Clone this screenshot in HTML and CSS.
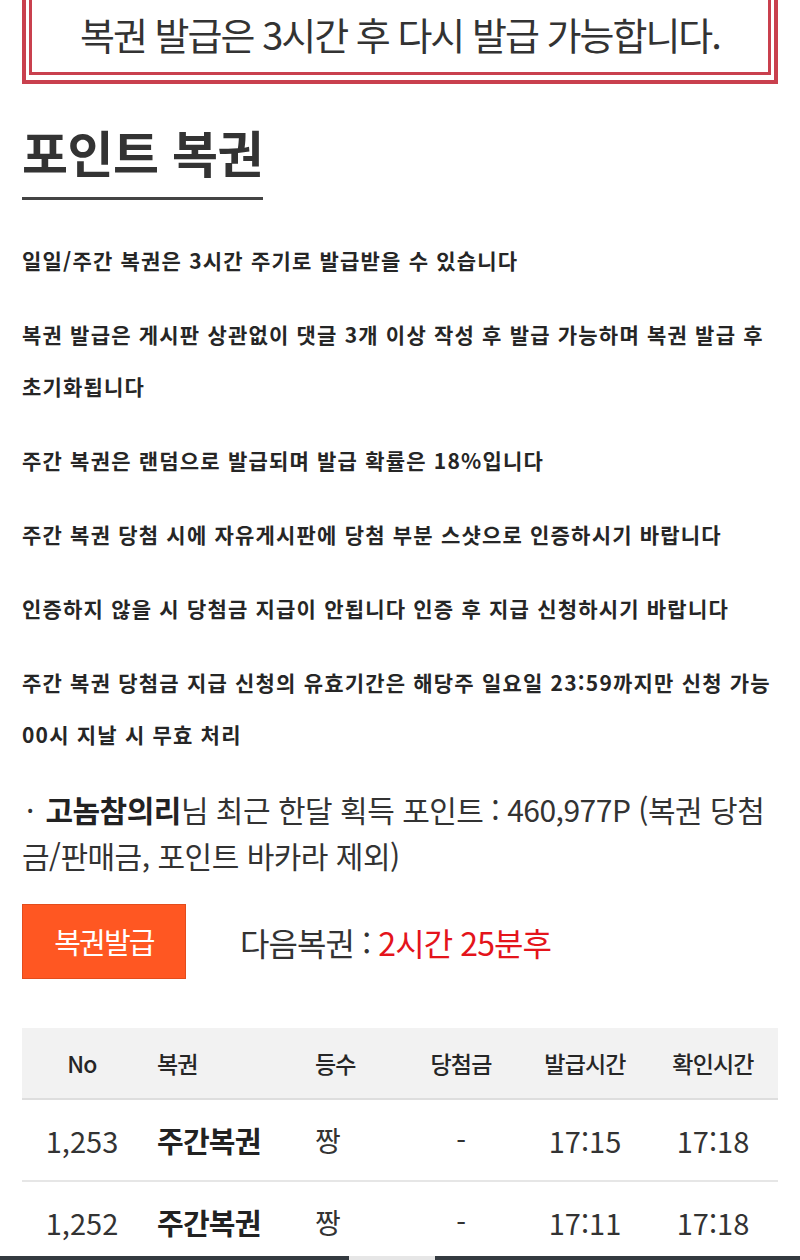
FILE: index.html
```html
<!DOCTYPE html>
<html lang="ko">
<head>
<meta charset="utf-8">
<title>포인트 복권</title>
<link rel="stylesheet" href="styles.css">
</head>
<body>
<div class="page">
  <div class="notice">
    <div class="notice-inner">복권 발급은 3시간 후 다시 발급 가능합니다.</div>
  </div>

  <h1 class="title">포인트 복권</h1>

  <div class="rules">
    <p>일일/주간 복권은 3시간 주기로 발급받을 수 있습니다</p>
    <p>복권 발급은 게시판 상관없이 댓글 3개 이상 작성 후 발급 가능하며 복권 발급 후 초기화됩니다</p>
    <p>주간 복권은 랜덤으로 발급되며 발급 확률은 18%입니다</p>
    <p>주간 복권 당첨 시에 자유게시판에 당첨 부분 스샷으로 인증하시기 바랍니다</p>
    <p>인증하지 않을 시 당첨금 지급이 안됩니다 인증 후 지급 신청하시기 바랍니다</p>
    <p>주간 복권 당첨금 지급 신청의 유효기간은 해당주 일요일 23:59까지만 신청 가능 00시 지날 시 무효 처리</p>
  </div>

  <p class="points"><span class="bullet">·</span><b>고놈참의리</b>님 최근 한달 획득 포인트 : 460,977P (복권 당첨금/판매금, 포인트 바카라 제외)</p>

  <div class="issue">
    <button class="issue-btn" type="button">복권발급</button>
    <span class="next">다음복권 : <em>2시간 25분후</em></span>
  </div>

  <table class="list">
    <colgroup>
      <col class="c1"><col class="c2"><col class="c3"><col class="c4"><col class="c5"><col class="c6">
    </colgroup>
    <thead>
      <tr>
        <th>No</th><th class="left">복권</th><th class="left">등수</th><th>당첨금</th><th>발급시간</th><th>확인시간</th>
      </tr>
    </thead>
    <tbody>
      <tr>
        <td class="num">1,253</td><td class="left strong">주간복권</td><td class="left">짱</td><td>-</td><td class="num">17:15</td><td class="num">17:18</td>
      </tr>
      <tr>
        <td class="num">1,252</td><td class="left strong">주간복권</td><td class="left">짱</td><td>-</td><td class="num">17:11</td><td class="num">17:18</td>
      </tr>
    </tbody>
  </table>
</div>
<div class="footbar"><span class="footbar-seg"></span></div>
</body>
</html>
```

FILE: styles.css
```css
* { box-sizing: border-box; }
html, body { margin: 0; padding: 0; background: #fff; }
body {
  font-family: "Noto Sans CJK KR", "Noto Sans", sans-serif;
  color: #333;
}
.page { padding: 0 22px 40px; }

.notice {
  border: 4px solid #c9404e;
  border-top: 0;
  padding: 0 3px 5px;
}
.notice-inner {
  border: 3px solid #c9404e;
  border-top: 0;
  height: 75px;
  padding-top: 2px;
  line-height: 64px;
  text-align: center;
  font-size: 38px;
  letter-spacing: -2px;
  color: #333;
}

.title {
  display: inline-block;
  margin: 36px 0 0;
  padding-bottom: 15px;
  border-bottom: 3px solid #444;
  font-size: 50px;
  line-height: 62px;
  font-weight: 700;
  color: #333;
  letter-spacing: -0.5px;
}

.rules { margin-top: 34px; }
.rules p {
  margin: 0 0 22px;
  font-size: 21px;
  line-height: 52px;
  font-weight: 700;
  color: #262626;
  letter-spacing: 1.2px;
  word-break: keep-all;
}

.points {
  margin: 26px 0 0;
  font-size: 30px;
  line-height: 46px;
  color: #333;
  letter-spacing: -0.5px;
}
.points .bullet { margin: 0 11px 0 4px; letter-spacing: 0; }
.points b { font-weight: 700; color: #222; }

.issue {
  margin-top: 26px;
  display: flex;
  align-items: center;
  gap: 54px;
}
.issue-btn {
  width: 164px;
  height: 75px;
  background: #ff5722;
  border: 1px solid #e24c1c;
  color: #fff;
  font-family: inherit;
  font-size: 29px;
  letter-spacing: -1.8px;
  padding: 0 0 2px;
}
.next {
  font-size: 32px;
  color: #333;
  letter-spacing: -0.9px;
}
.next em { font-style: normal; color: #e4141b; }

.list {
  margin-top: 49px;
  width: 100%;
  border-collapse: collapse;
  table-layout: fixed;
}
.c1 { width: 120px; }
.c2 { width: 158px; }
.c3 { width: 100px; }
.c4 { width: 122px; }
.c5 { width: 126px; }
.c6 { width: 130px; }
.list th {
  height: 71px;
  background: #f2f2f2;
  border-bottom: 2px solid #dedede;
  font-size: 23px;
  font-weight: 500;
  color: #262626;
  text-align: center;
  padding: 0;
  letter-spacing: -0.8px;
}
.list td {
  height: 82px;
  border-bottom: 2px solid #e6e6e6;
  font-size: 28px;
  color: #333;
  text-align: center;
  padding: 0;
}
.list .left { text-align: left; padding-left: 15px; }
.list td.strong { font-weight: 700; color: #222; font-size: 29px; letter-spacing: -0.8px; }
.list td.num { font-size: 29px; font-weight: 400; letter-spacing: 0; }

.footbar {
  position: fixed;
  left: 0; right: 0; bottom: 0;
  height: 4px;
  background: #343a40;
}
.footbar-seg {
  position: absolute;
  left: 349px;
  top: 0;
  width: 86px;
  height: 4px;
  background: #e6e6e6;
}
```
